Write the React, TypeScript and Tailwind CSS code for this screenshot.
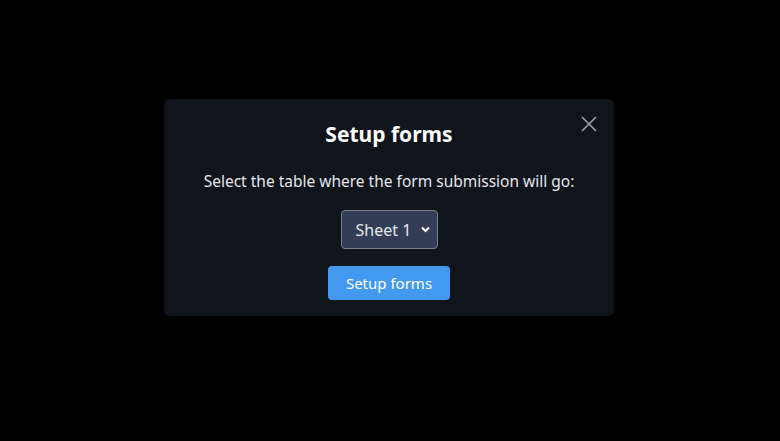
import React from 'react';

export default function App() {
  const font = { fontFamily: '"Noto Sans", "Open Sans", sans-serif' };

  return (
    <div className="w-[780px] h-[441px] bg-black flex justify-center items-start pt-[99px]" style={font}>
      {/* Modal */}
      <div className="relative w-[450px] h-[217px] mr-[2px] bg-[#10141b] rounded-md flex flex-col items-center pt-[21px]">
        <button
          type="button"
          className="absolute right-[16px] top-[16px] w-[18px] h-[18px] flex items-center justify-center text-[#9ca3af]"
        >
          <svg width="16" height="16" viewBox="0 0 16 16" fill="none" stroke="currentColor" strokeWidth="1.6">
            <path d="M1 1L15 15M15 1L1 15" />
          </svg>
        </button>

        <h2 className="text-[21px] leading-[28px] font-bold text-white">Setup forms</h2>

        <p className="mt-[23px] text-[15.5px] leading-[20px] text-[#e5e7eb]">
          Select the table where the form submission will go:
        </p>

        <div className="relative mt-[19px]">
          <select
            defaultValue="Sheet 1"
            className="appearance-none block w-[97px] h-[39px] pl-[14px] pr-[26px] bg-[#333e56] border border-[#7b818c] rounded-[4px] text-[16px] text-[#e5e7eb] outline-none"
            style={font}
          >
            <option>Sheet 1</option>
          </select>
          <svg
            className="absolute right-[8px] top-[16px] pointer-events-none text-white"
            width="9"
            height="7"
            viewBox="0 0 9 7"
            fill="none"
            stroke="currentColor"
            strokeWidth="2"
          >
            <path d="M1 1.5L4.5 5L8 1.5" />
          </svg>
        </div>

        <button
          type="button"
          className="mt-[17px] w-[122px] h-[34px] bg-[#4399ef] rounded-[4px] text-[15px] text-white"
        >
          Setup forms
        </button>
      </div>
    </div>
  );
}
